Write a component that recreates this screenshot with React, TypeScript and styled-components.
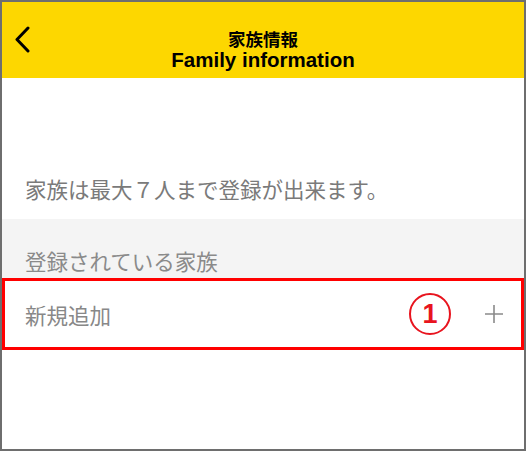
import React from 'react';
import styled, { createGlobalStyle } from 'styled-components';

const GlobalStyle = createGlobalStyle`
  html, body {
    margin: 0;
    padding: 0;
    background: #ffffff;
  }
  body {
    font-family: "Noto Sans CJK JP", "Noto Sans", sans-serif;
  }
`;

const Frame = styled.div`
  box-sizing: border-box;
  width: 526px;
  height: 451px;
  border: 2px solid #6e6e6e;
  display: flex;
  flex-direction: column;
  background: #ffffff;
  overflow: hidden;
`;

const Header = styled.header`
  height: 76px;
  background-color: #fdd700;
  display: grid;
  grid-template-columns: 48px 1fr 48px;
  align-items: center;
`;

const BackButton = styled.button`
  background: transparent;
  border: none;
  padding: 0 0 0 11px;
  height: 100%;
  display: flex;
  align-items: center;
  cursor: pointer;
`;

const Title = styled.div`
  align-self: stretch;
  box-sizing: border-box;
  display: flex;
  flex-direction: column;
  align-items: center;
  color: #000;
  padding-top: 26px;
`;

const TitleJa = styled.span`
  font-family: "Noto Sans CJK JP", sans-serif;
  font-size: 17.5px;
  font-weight: 700;
  line-height: 21px;
`;

const TitleEn = styled.span`
  font-family: "Liberation Sans", "Noto Sans", sans-serif;
  font-size: 20.5px;
  font-weight: 700;
  line-height: 21px;
`;

const Notice = styled.p`
  margin: 0;
  height: 141px;
  box-sizing: border-box;
  padding: 0 0 15px 23px;
  display: flex;
  align-items: flex-end;
  font-size: 21.5px;
  color: #7a7a7a;
`;

const SectionTitle = styled.div`
  height: 59px;
  box-sizing: border-box;
  background: #f4f4f4;
  padding: 0 0 2px 23px;
  display: flex;
  align-items: flex-end;
  font-size: 21.5px;
  color: #8a8a8a;
`;

const AddRow = styled.div`
  height: 72px;
  box-sizing: border-box;
  border: 3px solid #ff0000;
  display: flex;
  align-items: center;
  padding: 0 18px 0 20px;
  font-size: 21.5px;
  color: #888;
`;

const Label = styled.span`
  flex: 1;
`;

const Marker = styled.span`
  width: 38px;
  height: 38px;
  border: 2px solid #e8141e;
  border-radius: 50%;
  color: #e8141e;
  display: flex;
  align-items: center;
  justify-content: center;
  font-family: "Liberation Sans", sans-serif;
  font-weight: 700;
  font-size: 27px;
  margin-right: 34px;
`;

const PlusIcon = styled.svg`
  width: 18px;
  height: 18px;
`;

export default function App() {
  return (
    <>
      <GlobalStyle />
      <Frame>
        <Header>
          <BackButton aria-label="back">
            <svg width="20" height="28" viewBox="0 0 20 28">
              <path d="M15 2 L4 13.5 L15 25" fill="none" stroke="#000" strokeWidth="3" strokeLinecap="round" strokeLinejoin="round" />
            </svg>
          </BackButton>
          <Title>
            <TitleJa>家族情報</TitleJa>
            <TitleEn>Family information</TitleEn>
          </Title>
          <div />
        </Header>
        <Notice>家族は最大７人まで登録が出来ます。</Notice>
        <SectionTitle>登録されている家族</SectionTitle>
        <AddRow>
          <Label>新規追加</Label>
          <Marker>1</Marker>
          <PlusIcon viewBox="0 0 18 18">
            <path d="M9 0 V18 M0 9 H18" stroke="#8a8a8a" strokeWidth="1.6" />
          </PlusIcon>
        </AddRow>
      </Frame>
    </>
  );
}
